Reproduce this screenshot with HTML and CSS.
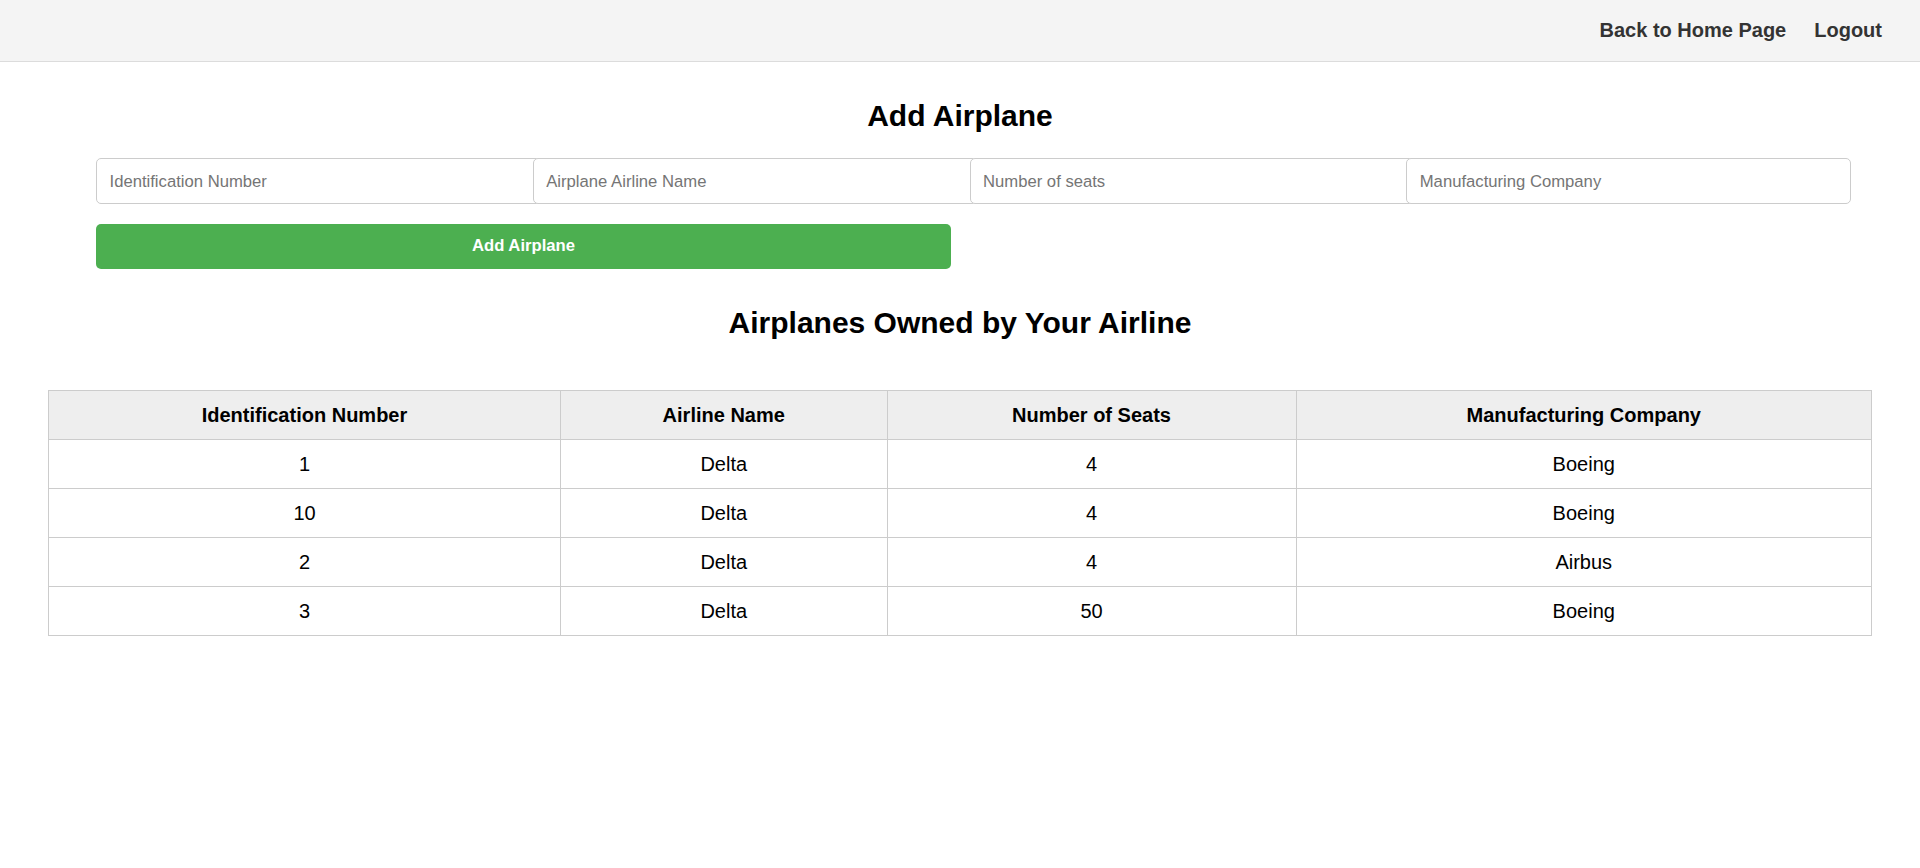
FILE: index.html
```html
<!DOCTYPE html>
<html lang="en">
<head>
<meta charset="utf-8">
<title>Manage Airplanes</title>
<link rel="stylesheet" href="styles.css">
</head>
<body>
<header class="topbar">
  <nav class="nav">
    <a class="nav-link" href="#">Back to Home Page</a>
    <a class="nav-link" href="#">Logout</a>
  </nav>
</header>
<main class="main">
  <h2 class="title title-add">Add Airplane</h2>
  <form class="add-form">
    <div class="form-row">
      <input class="field" type="text" placeholder="Identification Number">
      <input class="field" type="text" placeholder="Airplane Airline Name">
      <input class="field" type="text" placeholder="Number of seats">
      <input class="field" type="text" placeholder="Manufacturing Company">
    </div>
    <button class="submit" type="button">Add Airplane</button>
  </form>
  <h2 class="title title-list">Airplanes Owned by Your Airline</h2>
  <table class="planes">
    <colgroup>
      <col class="c1"><col class="c2"><col class="c3"><col class="c4">
    </colgroup>
    <thead>
      <tr><th>Identification Number</th><th>Airline Name</th><th>Number of Seats</th><th>Manufacturing Company</th></tr>
    </thead>
    <tbody>
      <tr><td>1</td><td>Delta</td><td>4</td><td>Boeing</td></tr>
      <tr><td>10</td><td>Delta</td><td>4</td><td>Boeing</td></tr>
      <tr><td>2</td><td>Delta</td><td>4</td><td>Airbus</td></tr>
      <tr><td>3</td><td>Delta</td><td>50</td><td>Boeing</td></tr>
    </tbody>
  </table>
</main>
</body>
</html>
```
FILE: styles.css
```css
* { box-sizing: border-box; }
html, body { margin: 0; padding: 0; background: #fff; }
body {
  font-family: "Liberation Sans", Arial, sans-serif;
  color: #000;
}
.topbar {
  background: #f4f4f4;
  border-bottom: 1px solid #dcdcdc;
  height: 62px;
  padding: 19px 38px 0 0;
}
.nav {
  display: flex;
  justify-content: flex-end;
  gap: 28px;
}
.nav-link {
  font-size: 20px;
  font-weight: bold;
  color: #333;
  text-decoration: none;
  line-height: 23px;
}
.main { display: block; }
.title {
  font-size: 30px;
  font-weight: bold;
  text-align: center;
  line-height: 34.5px;
  margin: 0;
  color: #000;
}
.title-add { margin: 36.5px 0 25px; }
.title-list { margin: 36.5px 0 49.5px; }
.add-form { margin-left: 96px; }
.form-row { display: flex; }
.field {
  width: 444.5px;
  height: 46px;
  margin: 0 -7.75px 0 0;
  padding: 2px 12.5px 0;
  border: 1px solid #ccc;
  border-radius: 5px;
  font-family: "Liberation Sans", Arial, sans-serif;
  font-size: 16.67px;
  color: #000;
  background: #fff;
  position: relative;
}
.field:last-child { margin-right: 0; }
.field::placeholder { color: #757575; }
.submit {
  display: block;
  width: 855px;
  height: 45px;
  margin-top: 20px;
  padding: 0 0 2px;
  border: none;
  border-radius: 5px;
  background: #4caf50;
  color: #fff;
  font-family: "Liberation Sans", Arial, sans-serif;
  font-size: 16.67px;
  font-weight: bold;
}
.planes {
  width: 1823px;
  margin: 0 auto;
  border-collapse: collapse;
  table-layout: fixed;
}
.c1 { width: 512px; }
.c2 { width: 326.5px; }
.c3 { width: 409px; }
.c4 { width: 575.5px; }
.planes th, .planes td {
  border: 1px solid #ccc;
  padding: 13.5px 10px 11.5px;
  font-size: 20px;
  line-height: 23px;
  text-align: center;
  color: #000;
}
.planes th {
  background: #eee;
  font-weight: bold;
}
```
